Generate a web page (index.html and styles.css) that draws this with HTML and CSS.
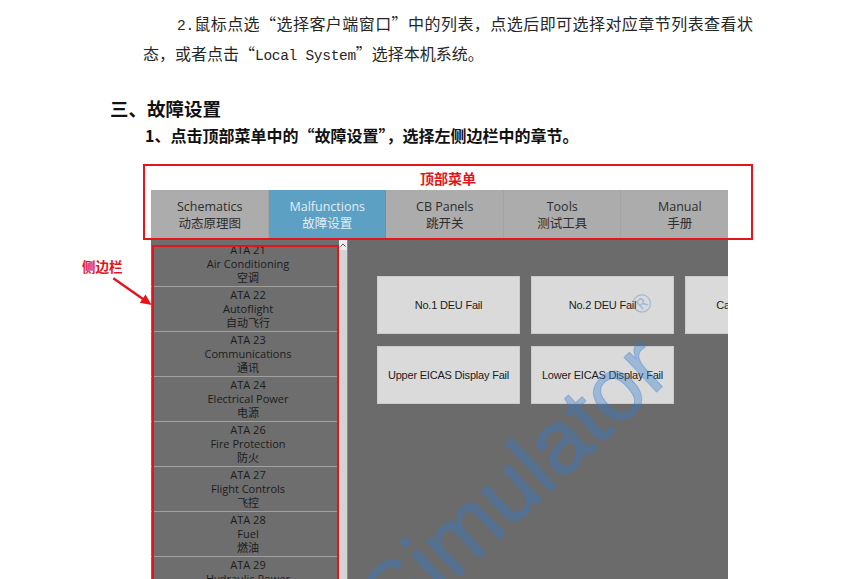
FILE: index.html
```html
<!DOCTYPE html>
<html lang="zh-CN">
<head>
    <meta charset="UTF-8">
    <meta name="viewport" content="width=device-width, initial-scale=1.0">
    <title>故障设置</title>
    <link rel="stylesheet" href="styles.css">
</head>
<body>
    <div class="doc">
        <p class="para">
            <span class="line justify"><span class="mono">2.</span>鼠标点选“选择客户端窗口”中的列表，点选后即可选择对应章节列表查看状</span>
            <span class="line">态，或者点击“<span class="mono">Local System</span>”选择本机系统。</span>
        </p>

        <h2 class="sec">三、故障设置</h2>
        <h3 class="step">1、点击顶部菜单中的“故障设置”，选择左侧边栏中的章节。</h3>

        <div class="figure">
            <div class="app">
                <nav class="menu">
                    <div class="tab"><span>Schematics</span><span>动态原理图</span></div>
                    <div class="tab active"><span>Malfunctions</span><span>故障设置</span></div>
                    <div class="tab"><span>CB Panels</span><span>跳开关</span></div>
                    <div class="tab"><span>Tools</span><span>测试工具</span></div>
                    <div class="tab"><span>Manual</span><span>手册</span></div>
                </nav>
                <div class="body">
                    <aside class="sidebar">
                        <div class="list">
                            <div class="item"><span>ATA 21</span><span>Air Conditioning</span><span>空调</span></div>
                            <div class="item"><span>ATA 22</span><span>Autoflight</span><span>自动飞行</span></div>
                            <div class="item"><span>ATA 23</span><span>Communications</span><span>通讯</span></div>
                            <div class="item"><span>ATA 24</span><span>Electrical Power</span><span>电源</span></div>
                            <div class="item"><span>ATA 26</span><span>Fire Protection</span><span>防火</span></div>
                            <div class="item"><span>ATA 27</span><span>Flight Controls</span><span>飞控</span></div>
                            <div class="item"><span>ATA 28</span><span>Fuel</span><span>燃油</span></div>
                            <div class="item"><span>ATA 29</span><span>Hydraulic Power</span><span>液压</span></div>
                        </div>
                        <div class="scroll">
                            <div class="scroll-up">
                                <svg width="8" height="8" viewBox="0 0 8 8"><polyline points="1.5,5.5 4,3 6.5,5.5" fill="none" stroke="#555" stroke-width="1"/></svg>
                            </div>
                        </div>
                    </aside>
                    <main class="faults">
                        <div class="fault">No.1 DEU Fail</div>
                        <div class="fault">No.2 DEU Fail</div>
                        <div class="fault">Captain PFD Fail</div>
                        <div class="fault">Upper EICAS Display Fail</div>
                        <div class="fault">Lower EICAS Display Fail</div>
                    </main>
                </div>
                <div class="watermark">Simulator<span class="reg">®</span></div>
            </div>

            <!-- annotations drawn over the screenshot -->
            <div class="mark mark-menu"></div>
            <div class="mark mark-side"></div>
            <div class="note note-top">顶部菜单</div>
            <div class="note note-side">侧边栏</div>
            <svg class="arrow" width="55" height="36" viewBox="0 0 55 36">
                <line x1="10.3" y1="4.3" x2="40" y2="24.9" stroke="#e3151b" stroke-width="2.4"/>
                <polygon points="48.7,31 36.8,28.8 42.5,20.6" fill="#e3151b"/>
            </svg>
        </div>
    </div>
</body>
</html>
```

FILE: styles.css
```css
html, body {
    height: 579px;
    overflow: hidden;
}
body {
    margin: 0;
    background: #fff;
    font-family: "Noto Sans CJK SC", sans-serif;
    color: #262626;
}

.doc {
    padding-top: 8px;
}
.para {
    margin: 0 0 0 143px;
    width: 610px;
    font-size: 16px;
    line-height: 30px;
}
.line {
    display: block;
    height: 30px;
}
.line.justify {
    padding-left: 34px;
    text-align: justify;
    text-align-last: justify;
}
.mono {
    font-family: "Liberation Mono", monospace;
    font-size: 14.5px;
    line-height: 1;
    letter-spacing: -0.3px;
}
.sec {
    margin: 25px 0 0 110px;
    font-size: 18.5px;
    line-height: 30px;
    font-weight: bold;
    color: #111;
}
.step {
    margin: 0 0 17px 145px;
    font-size: 16px;
    line-height: 24px;
    font-weight: bold;
    color: #111;
}

/* screenshot of the simulator */
.figure {
    position: relative;
    margin-left: 143px;
    width: 610px;
    padding: 26px 0 0 8px;
    box-sizing: border-box;
}
.app {
    position: relative;
    width: 577px;
    height: 400px;
    overflow: hidden;
    background: #6b6b6b;
    display: flex;
    flex-direction: column;
    font-family: "Open Sans", "Noto Sans CJK SC", sans-serif;
}
.menu {
    display: flex;
    flex: none;
    height: 50px;
    background: #acacac;
}
.tab {
    flex: none;
    width: 117.5px;
    display: flex;
    flex-direction: column;
    align-items: center;
    justify-content: center;
    font-size: 12.5px;
    line-height: 17px;
    color: #2e2e2e;
    box-shadow: inset -1px 0 0 rgba(0, 0, 0, 0.05);
}
.tab.active {
    background: #5ca0c4;
    color: #e3eef5;
}
.body {
    flex: 1;
    display: flex;
    min-height: 0;
}
.sidebar {
    flex: none;
    display: flex;
}
.list {
    width: 188px;
    padding-top: 2px;
    background: #6e6e6e;
}
.item {
    height: 44px;
    padding-left: 6px;
    border-bottom: 1px solid #a0a0a0;
    display: flex;
    flex-direction: column;
    align-items: center;
    justify-content: center;
    font-size: 11px;
    line-height: 14px;
    color: #1c1c1c;
}
.scroll {
    width: 8px;
    background: #d4d4d4;
    border-right: 1px solid #8a8a8a;
}
.scroll-up {
    height: 10px;
    background: #ededed;
    display: flex;
    align-items: center;
    justify-content: center;
}
.faults {
    flex: 1;
    min-width: 0;
    padding: 36px 0 0 29px;
    display: grid;
    grid-template-columns: repeat(3, 143px);
    grid-auto-rows: 58px;
    gap: 12px 11px;
    align-content: start;
}
.fault {
    background: #dadada;
    border: 1px solid #cbcbcb;
    box-sizing: border-box;
    display: flex;
    align-items: center;
    justify-content: center;
    white-space: nowrap;
    font-family: "Liberation Sans", Arial, sans-serif;
    font-size: 11px;
    letter-spacing: -0.2px;
    color: #1c1c1c;
}
.watermark {
    position: absolute;
    left: 245px;
    top: 369px;
    font-family: "Liberation Sans", Arial, sans-serif;
    font-size: 90px;
    line-height: 90px;
    white-space: nowrap;
    color: rgba(50, 125, 210, 0.36);
    -webkit-text-stroke: 1px rgba(50, 125, 210, 0.36);
    transform-origin: 0 76px;
    transform: rotate(-43deg);
    pointer-events: none;
}
.reg {
    position: relative;
    top: -66px;
    margin-left: 16px;
    font-size: 26px;
    -webkit-text-stroke: 0;
}

/* red annotations */
.mark {
    position: absolute;
    border: 2px solid #e3151b;
    box-sizing: border-box;
}
.mark-menu {
    left: 0;
    top: 0;
    width: 610px;
    height: 76px;
}
.mark-side {
    left: 9px;
    top: 81px;
    width: 187px;
    height: 400px;
}
.note {
    position: absolute;
    color: #e3151b;
    font-weight: bold;
    font-size: 14px;
    line-height: 18px;
}
.note-top {
    left: 0;
    right: 0;
    top: 5px;
    text-align: center;
}
.note-side {
    left: -61px;
    top: 93px;
    font-size: 13.5px;
}
.arrow {
    position: absolute;
    left: -40px;
    top: 110px;
}
```
